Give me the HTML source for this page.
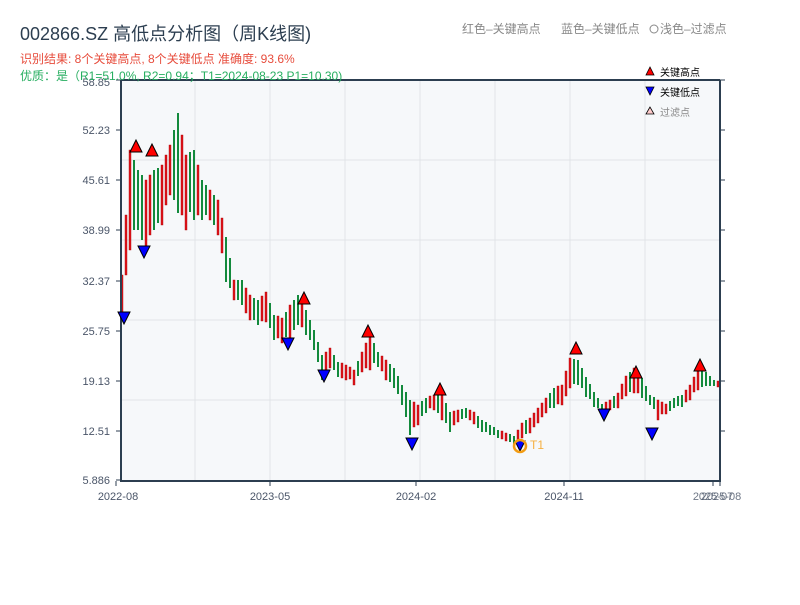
<!DOCTYPE html>
<html><head><meta charset="utf-8"><style>
body{margin:0;background:#fff;width:800px;height:600px;overflow:hidden;font-family:"Liberation Sans","Noto Sans CJK SC",sans-serif;}
svg text{font-family:"Liberation Sans","Noto Sans CJK SC",sans-serif;}
.r{fill:#e0151b;stroke:#a00;stroke-width:.4}
.g{fill:#138a3c}
.h{fill:#f00;stroke:#000;stroke-width:1}
.l{fill:#00f;stroke:#000;stroke-width:1}
</style></head><body>
<svg width="800" height="600" xmlns="http://www.w3.org/2000/svg">
<rect x="121" y="80" width="599" height="400" fill="#f6f8fa"/>
<g stroke="#e1e4e8" stroke-width="1">
<line x1="195" y1="80" x2="195" y2="480"/><line x1="270" y1="80" x2="270" y2="480"/><line x1="345" y1="80" x2="345" y2="480"/><line x1="420" y1="80" x2="420" y2="480"/><line x1="495" y1="80" x2="495" y2="480"/><line x1="570" y1="80" x2="570" y2="480"/><line x1="645" y1="80" x2="645" y2="480"/>
<line x1="121" y1="160" x2="720" y2="160"/><line x1="121" y1="240" x2="720" y2="240"/><line x1="121" y1="320" x2="720" y2="320"/><line x1="121" y1="400" x2="720" y2="400"/>
</g>
<g>
<rect class="r" x="121" y="275" width="2" height="40"/>
<rect class="r" x="129" y="150" width="2" height="100"/>
<rect class="g" x="137" y="170" width="2" height="60"/>
<rect class="r" x="145" y="180" width="2" height="70"/>
<rect class="g" x="153" y="170" width="2" height="60"/>
<rect class="r" x="161" y="165" width="2" height="60"/>
<rect class="r" x="169" y="145" width="2" height="50"/>
<rect class="g" x="177" y="113" width="2" height="100"/>
<rect class="r" x="185" y="155" width="2" height="75"/>
<rect class="g" x="193" y="150" width="2" height="70"/>
<rect class="g" x="201" y="180" width="2" height="40"/>
<rect class="r" x="209" y="190" width="2" height="30"/>
<rect class="r" x="217" y="200" width="2" height="35"/>
<rect class="g" x="225" y="237" width="2" height="45"/>
<rect class="r" x="233" y="280" width="2" height="20"/>
<rect class="g" x="241" y="280" width="2" height="25"/>
<rect class="r" x="249" y="295" width="2" height="25"/>
<rect class="g" x="257" y="300" width="2" height="25"/>
<rect class="r" x="265" y="292" width="2" height="30"/>
<rect class="g" x="273" y="315" width="2" height="25"/>
<rect class="r" x="281" y="318" width="2" height="25"/>
<rect class="r" x="289" y="305" width="2" height="35"/>
<rect class="g" x="297" y="295" width="2" height="30"/>
<rect class="g" x="305" y="310" width="2" height="25"/>
<rect class="g" x="313" y="330" width="2" height="20"/>
<rect class="g" x="321" y="355" width="2" height="25"/>
<rect class="r" x="329" y="348" width="2" height="20"/>
<rect class="g" x="337" y="362" width="2" height="15"/>
<rect class="r" x="345" y="365" width="2" height="15"/>
<rect class="r" x="353" y="370" width="2" height="15"/>
<rect class="r" x="361" y="352" width="2" height="20"/>
<rect class="r" x="369" y="335" width="2" height="35"/>
<rect class="g" x="377" y="352" width="2" height="15"/>
<rect class="r" x="385" y="360" width="2" height="20"/>
<rect class="g" x="393" y="368" width="2" height="20"/>
<rect class="g" x="401" y="385" width="2" height="20"/>
<rect class="g" x="409" y="400" width="2" height="35"/>
<rect class="r" x="417" y="405" width="2" height="20"/>
<rect class="g" x="425" y="398" width="2" height="15"/>
<rect class="r" x="433" y="395" width="2" height="15"/>
<rect class="r" x="441" y="395" width="2" height="25"/>
<rect class="g" x="449" y="412" width="2" height="20"/>
<rect class="r" x="457" y="410" width="2" height="12"/>
<rect class="g" x="465" y="408" width="2" height="10"/>
<rect class="r" x="473" y="412" width="2" height="12"/>
<rect class="g" x="481" y="420" width="2" height="12"/>
<rect class="g" x="489" y="425" width="2" height="10"/>
<rect class="g" x="497" y="430" width="2" height="8"/>
<rect class="r" x="505" y="433" width="2" height="8"/>
<rect class="g" x="513" y="436" width="2" height="8"/>
<rect class="r" x="521" y="423" width="2" height="15"/>
<rect class="r" x="529" y="418" width="2" height="15"/>
<rect class="r" x="537" y="408" width="2" height="15"/>
<rect class="r" x="545" y="398" width="2" height="15"/>
<rect class="g" x="553" y="388" width="2" height="20"/>
<rect class="r" x="561" y="385" width="2" height="20"/>
<rect class="r" x="569" y="358" width="2" height="30"/>
<rect class="g" x="577" y="360" width="2" height="25"/>
<rect class="g" x="585" y="377" width="2" height="20"/>
<rect class="g" x="593" y="392" width="2" height="15"/>
<rect class="g" x="601" y="404" width="2" height="8"/>
<rect class="r" x="609" y="400" width="2" height="10"/>
<rect class="r" x="617" y="393" width="2" height="15"/>
<rect class="r" x="625" y="376" width="2" height="20"/>
<rect class="r" x="633" y="368" width="2" height="25"/>
<rect class="g" x="641" y="378" width="2" height="20"/>
<rect class="g" x="649" y="395" width="2" height="10"/>
<rect class="r" x="657" y="400" width="2" height="20"/>
<rect class="r" x="665" y="404" width="2" height="10"/>
<rect class="g" x="673" y="398" width="2" height="10"/>
<rect class="g" x="681" y="395" width="2" height="12"/>
<rect class="r" x="689" y="385" width="2" height="15"/>
<rect class="r" x="697" y="370" width="2" height="20"/>
<rect class="g" x="705" y="372" width="2" height="14"/>
<rect class="g" x="713" y="380" width="2" height="6"/>
<rect class="r" x="125" y="215" width="2" height="60"/>
<rect class="g" x="133" y="160" width="2" height="70"/>
<rect class="g" x="141" y="175" width="2" height="65"/>
<rect class="r" x="149" y="175" width="2" height="60"/>
<rect class="g" x="157" y="168" width="2" height="55"/>
<rect class="r" x="165" y="155" width="2" height="50"/>
<rect class="g" x="173" y="130" width="2" height="70"/>
<rect class="r" x="181" y="135" width="2" height="80"/>
<rect class="g" x="189" y="152" width="2" height="60"/>
<rect class="r" x="197" y="165" width="2" height="50"/>
<rect class="g" x="205" y="185" width="2" height="30"/>
<rect class="g" x="213" y="195" width="2" height="30"/>
<rect class="r" x="221" y="218" width="2" height="35"/>
<rect class="g" x="229" y="258" width="2" height="30"/>
<rect class="g" x="237" y="280" width="2" height="20"/>
<rect class="r" x="245" y="288" width="2" height="25"/>
<rect class="g" x="253" y="298" width="2" height="22"/>
<rect class="r" x="261" y="296" width="2" height="25"/>
<rect class="g" x="269" y="303" width="2" height="25"/>
<rect class="r" x="277" y="316" width="2" height="22"/>
<rect class="g" x="285" y="312" width="2" height="25"/>
<rect class="g" x="293" y="300" width="2" height="30"/>
<rect class="r" x="301" y="302" width="2" height="25"/>
<rect class="g" x="309" y="320" width="2" height="20"/>
<rect class="g" x="317" y="342" width="2" height="20"/>
<rect class="r" x="325" y="352" width="2" height="20"/>
<rect class="g" x="333" y="355" width="2" height="15"/>
<rect class="r" x="341" y="363" width="2" height="15"/>
<rect class="r" x="349" y="367" width="2" height="12"/>
<rect class="g" x="357" y="361" width="2" height="15"/>
<rect class="r" x="365" y="343" width="2" height="25"/>
<rect class="g" x="373" y="343" width="2" height="20"/>
<rect class="r" x="381" y="356" width="2" height="15"/>
<rect class="g" x="389" y="364" width="2" height="18"/>
<rect class="g" x="397" y="376" width="2" height="18"/>
<rect class="g" x="405" y="392" width="2" height="25"/>
<rect class="r" x="413" y="402" width="2" height="25"/>
<rect class="g" x="421" y="401" width="2" height="15"/>
<rect class="r" x="429" y="396" width="2" height="12"/>
<rect class="g" x="437" y="395" width="2" height="18"/>
<rect class="g" x="445" y="403" width="2" height="20"/>
<rect class="r" x="453" y="411" width="2" height="14"/>
<rect class="g" x="461" y="409" width="2" height="10"/>
<rect class="r" x="469" y="410" width="2" height="10"/>
<rect class="g" x="477" y="416" width="2" height="12"/>
<rect class="g" x="485" y="422" width="2" height="10"/>
<rect class="g" x="493" y="427" width="2" height="8"/>
<rect class="r" x="501" y="431" width="2" height="8"/>
<rect class="g" x="509" y="434" width="2" height="8"/>
<rect class="r" x="517" y="430" width="2" height="10"/>
<rect class="g" x="525" y="420" width="2" height="14"/>
<rect class="r" x="533" y="413" width="2" height="14"/>
<rect class="r" x="541" y="403" width="2" height="14"/>
<rect class="g" x="549" y="393" width="2" height="15"/>
<rect class="r" x="557" y="386" width="2" height="18"/>
<rect class="r" x="565" y="371" width="2" height="25"/>
<rect class="g" x="573" y="359" width="2" height="25"/>
<rect class="g" x="581" y="368" width="2" height="20"/>
<rect class="g" x="589" y="384" width="2" height="15"/>
<rect class="g" x="597" y="398" width="2" height="10"/>
<rect class="r" x="605" y="402" width="2" height="8"/>
<rect class="g" x="613" y="396" width="2" height="12"/>
<rect class="r" x="621" y="384" width="2" height="15"/>
<rect class="g" x="629" y="372" width="2" height="20"/>
<rect class="r" x="637" y="373" width="2" height="20"/>
<rect class="g" x="645" y="386" width="2" height="15"/>
<rect class="g" x="653" y="397" width="2" height="12"/>
<rect class="r" x="661" y="402" width="2" height="12"/>
<rect class="g" x="669" y="401" width="2" height="10"/>
<rect class="g" x="677" y="396" width="2" height="10"/>
<rect class="r" x="685" y="390" width="2" height="12"/>
<rect class="r" x="693" y="377" width="2" height="15"/>
<rect class="g" x="701" y="371" width="2" height="16"/>
<rect class="g" x="709" y="376" width="2" height="10"/>
<rect class="r" x="717" y="381" width="2" height="6"/>
</g>
<g stroke="#2c3e50" stroke-width="2" fill="none"><line x1="121" y1="80" x2="121" y2="481"/><line x1="120" y1="481" x2="721" y2="481"/><line x1="720" y1="80" x2="720" y2="481"/><line x1="121" y1="80" x2="720" y2="80"/></g>
<g stroke="#2c3e50" stroke-width="1">
<line x1="116" y1="80" x2="121" y2="80"/><line x1="116" y1="130" x2="121" y2="130"/><line x1="116" y1="180" x2="121" y2="180"/><line x1="116" y1="230" x2="121" y2="230"/><line x1="116" y1="281" x2="121" y2="281"/><line x1="116" y1="331" x2="121" y2="331"/><line x1="116" y1="381" x2="121" y2="381"/><line x1="116" y1="431" x2="121" y2="431"/><line x1="116" y1="480" x2="121" y2="480"/>
<line x1="720" y1="80" x2="725" y2="80"/><line x1="720" y1="130" x2="725" y2="130"/><line x1="720" y1="180" x2="725" y2="180"/><line x1="720" y1="230" x2="725" y2="230"/><line x1="720" y1="281" x2="725" y2="281"/><line x1="720" y1="331" x2="725" y2="331"/><line x1="720" y1="381" x2="725" y2="381"/><line x1="720" y1="431" x2="725" y2="431"/>
<line x1="116" y1="481" x2="116" y2="486"/><line x1="270" y1="481" x2="270" y2="486"/><line x1="416" y1="481" x2="416" y2="486"/><line x1="564" y1="481" x2="564" y2="486"/><line x1="713" y1="481" x2="713" y2="486"/><line x1="720" y1="481" x2="720" y2="486"/>
</g>
<g fill="#4a5568" font-size="11" text-anchor="end">
<text x="110" y="86">58.85</text><text x="110" y="134">52.23</text><text x="110" y="184">45.61</text><text x="110" y="234">38.99</text><text x="110" y="285">32.37</text><text x="110" y="335">25.75</text><text x="110" y="385">19.13</text><text x="110" y="435">12.51</text><text x="110" y="484">5.886</text>
</g>
<g fill="#4a5568" font-size="11" text-anchor="middle">
<text x="118" y="500">2022-08</text><text x="270" y="500">2023-05</text><text x="416" y="500">2024-02</text><text x="564" y="500">2024-11</text><text x="713" y="500" fill-opacity=".8">2025-07</text><text x="721" y="500" fill-opacity=".8">2025-08</text>
</g>
<g>
<polygon class="h" points="136,140 130,152 142,152"/>
<polygon class="h" points="152,144 146,156 158,156"/>
<polygon class="h" points="304,292 298,304 310,304"/>
<polygon class="h" points="368,325 362,337 374,337"/>
<polygon class="h" points="440,383 434,395 446,395"/>
<polygon class="h" points="576,342 570,354 582,354"/>
<polygon class="h" points="636,366 630,378 642,378"/>
<polygon class="h" points="700,359 694,371 706,371"/>
<polygon class="l" points="118,312 130,312 124,324"/>
<polygon class="l" points="138,246 150,246 144,258"/>
<polygon class="l" points="282,338 294,338 288,350"/>
<polygon class="l" points="318,370 330,370 324,382"/>
<polygon class="l" points="406,438 418,438 412,450"/>
<polygon class="l" points="598,409 610,409 604,421"/>
<polygon class="l" points="646,428 658,428 652,440"/>
<polygon class="l" points="515,441 525,441 520,451"/>
</g>
<circle cx="520" cy="446" r="6" fill="none" stroke="#f39c12" stroke-width="2.5"/>
<text x="530" y="449" fill="#f5b041" font-size="12">T1</text>
<text x="20" y="40" fill="#2c3e50" font-size="18">002866.SZ 高低点分析图（周K线图)</text>
<text x="20" y="63" fill="#e74c3c" font-size="12">识别结果: 8个关键高点, 8个关键低点  准确度: 93.6%</text>
<text x="20" y="80" fill="#27ae60" font-size="12">优质：是（R1=51.0%, R2=0.94；T1=2024-08-23 P1=10.30)</text>
<text x="462" y="33" fill="#888" font-size="12">红色–关键高点</text>
<text x="561" y="33" fill="#888" font-size="12">蓝色–关键低点</text>
<circle cx="654" cy="29" r="4" fill="none" stroke="#888"/>
<text x="660" y="33" fill="#888" font-size="12">浅色–过滤点</text>
<polygon points="650,67 646,75 654,75" fill="#f00" stroke="#000" stroke-width=".8"/>
<text x="660" y="76" font-size="10" fill="#000">关键高点</text>
<polygon points="646,87 654,87 650,95" fill="#00f" stroke="#000" stroke-width=".8"/>
<text x="660" y="96" font-size="10" fill="#000">关键低点</text>
<polygon points="650,107 646,114 654,114" fill="#fcc" stroke="#000" stroke-width=".8"/>
<text x="660" y="116" font-size="10" fill="#888">过滤点</text>
</svg>
</body></html>
